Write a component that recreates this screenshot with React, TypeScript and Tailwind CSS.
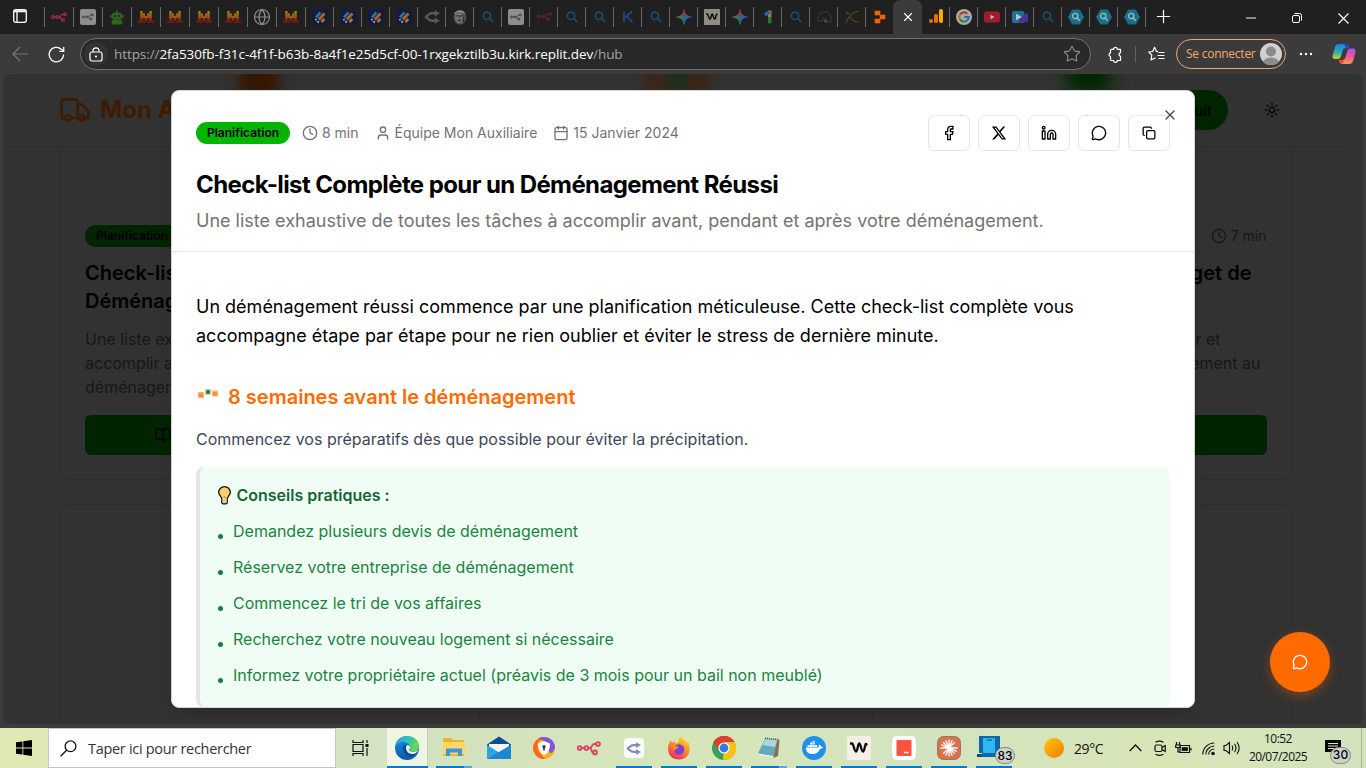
import React from "react";
import {
  Truck, Clock, User, Calendar, Facebook, Linkedin, MessageCircle, Copy, X, Sun,
  BookOpen, Globe, Star, Minus, Plus,
} from "lucide-react";
import { FaXTwitter } from "react-icons/fa6";

const SEGOE = "font-['Open_Sans','Noto_Sans',sans-serif]";

/* ---------- small drawings used in the tab strip and task bar ---------- */

function N8n({ color, size = 16 }: { color: string; size?: number }) {
  return (
    <svg width={size} height={size} viewBox="0 0 24 24" fill="none" stroke={color} strokeWidth="1.9">
      <circle cx="2.6" cy="12" r="1.9" />
      <circle cx="9.4" cy="12" r="1.9" />
      <circle cx="21" cy="8" r="1.9" />
      <circle cx="18" cy="16.4" r="1.9" />
      <path d="M4.5 12h3M11.3 12h1.4c2.6 0 1.6-4 4.4-4h2M12.7 12c2.6 0 .8 4.4 3.4 4.4" />
    </svg>
  );
}

function Mistral() {
  const rows = ["0100010", "0110110", "0111110", "0101010", "1110111"];
  const colors = ["#a5850f", "#a8700f", "#a5560f", "#92300f", "#7d1414"];
  return (
    <svg width="16" height="16" viewBox="0 0 16 16">
      {rows.map((r, y) =>
        r.split("").map((c, x) =>
          c === "1" ? <rect key={`${x}${y}`} x={x * 2.28} y={2 + y * 2.4} width="2.35" height="2.45" fill={colors[y]} /> : null
        )
      )}
    </svg>
  );
}

function Slashes() {
  return (
    <svg width="16" height="16" viewBox="0 0 16 16">
      <rect width="16" height="16" rx="1" fill="#151b40" />
      <path d="M4 8.300l4.500-5" stroke="#2478a8" strokeWidth="2.600" />
      <path d="M6.800 10.500l5.700-6" stroke="#b3621c" strokeWidth="2.800" />
      <path d="M9.500 13l2.800-3" stroke="#a87a2a" strokeWidth="2.600" />
      <path d="M3.500 10l.8 1.300M5.400 12.200l1.400 1.300" stroke="#a9a9b5" strokeWidth="1.800" />
    </svg>
  );
}

function Lens() {
  return (
    <svg width="16" height="16" viewBox="0 0 16 16" fill="none" stroke="#1c4b76" strokeWidth="1.6">
      <circle cx="7" cy="6.8" r="3.7" />
      <path d="M9.8 9.6l3.4 3.4" />
    </svg>
  );
}

function SplitArrow({ color, size = 16 }: { color: string; size?: number }) {
  return (
    <svg width={size} height={size} viewBox="0 0 16 16" fill="none" stroke={color} strokeWidth="2.4">
      <path d="M1 8C4.500 7.500 4 4.300 8 4.300h4M1 8C4.500 8.500 4 11.700 8 11.700h4" />
      <path d="M10.800 1.2l5.200 3.1-5.200 3.100zM10.800 8.600l5.200 3.100-5.200 3.100z" fill={color} stroke="none" />
    </svg>
  );
}

function Robot() {
  return (
    <svg width="16" height="16" viewBox="0 0 16 16">
      <path d="M7.3 1h1.4v3H7.3z" fill="#2f6322" />
      <rect x="3" y="3.6" width="10" height="7" rx="3" fill="#2f6322" />
      <path d="M1.2 6h1.5v3H1.2zM13.3 6h1.5v3h-1.5zM3.600 10.400h8.800c1.400 1.200 1.400 4 0 5.200H3.600c-1.400-1.200-1.400-4 0-5.200z" fill="#2f6322" />
      <circle cx="6" cy="7" r=".9" fill="#161616" />
      <circle cx="10" cy="7" r=".9" fill="#161616" />
    </svg>
  );
}

function Face() {
  return (
    <svg width="16" height="16" viewBox="0 0 16 16">
      <ellipse cx="8" cy="8.2" rx="6.3" ry="7.400" fill="#50565a" />
      <ellipse cx="7.200" cy="8.600" rx="4" ry="5.400" fill="#7c726b" />
      <path d="M2.500 5c2-3 6-4 10-1" stroke="#9a9a9a" strokeWidth="1.200" fill="none" />
      <path d="M4.200 6.800h2.600M8.400 6.800h2.600M5.800 11.300h3.400M11.500 8v5" stroke="#2b2a2a" strokeWidth="1.200" />
      <path d="M7.700 6.500v3" stroke="#4a423d" strokeWidth="1.100" />
    </svg>
  );
}

function Gemini() {
  return (
    <svg width="16" height="16" viewBox="0 0 16 16">
      <defs>
        <linearGradient id="gem" x1="0" y1="0.6" x2="1" y2="0.4">
          <stop offset="0" stopColor="#8b7d1c" />
          <stop offset="0.35" stopColor="#2f7a52" />
          <stop offset="0.6" stopColor="#2d5ca6" />
          <stop offset="1" stopColor="#3b62ab" />
        </linearGradient>
      </defs>
      <path d="M8 0.400C8.700 5 11 7.300 15.600 8 11 8.700 8.700 11 8 15.600 7.300 11 5 8.700 .4 8 5 7.300 7.300 5 8 .4z" fill="url(#gem)" stroke="url(#gem)" strokeWidth=".6" />
      <path d="M8 .4c.5 3 1.400 4.800 3 6L8 7 5 6.400C6.600 5.200 7.500 3.400 8 .4z" fill="#9a3a35" />
    </svg>
  );
}

function Wave({ size = 16, bg, rx = 1 }: { size?: number; bg: string; rx?: number }) {
  return (
    <svg width={size} height={size} viewBox="0 0 24 24">
      <rect width="24" height="24" rx={rx} fill={bg} />
      <path d="M3 7.500h2.200c1.300 0 2 8 3.800 8 1.600 0 1.800-8 3.300-8s1.900 8 3.600 8c1.400 0 1.600-4 2.400-6" stroke="#0b0b0b" strokeWidth="2.300" fill="none" />
      <circle cx="19" cy="8.300" r="1.600" fill="#0b0b0b" />
    </svg>
  );
}

function OneMark() {
  return (
    <svg width="16" height="16" viewBox="0 0 16 16" fill="none" strokeWidth="3.400">
      <path d="M9.700 1.500v7" stroke="#a58212" />
      <path d="M9.700 8.200v6.200" stroke="#277a3c" />
      <path d="M4.800 6.200L9.800 2.600" stroke="#2c5fae" />
      <path d="M9.500 1.500h1.900v3" stroke="#9b342d" strokeWidth="1" />
    </svg>
  );
}

function Hex() {
  return (
    <svg width="16" height="16" viewBox="0 0 16 16">
      <path d="M4.500 1h7L15.500 8l-4 7h-7L.5 8z" fill="#17718a" stroke="#17718a" strokeLinejoin="round" />
      <circle cx="7.200" cy="7" r="2.700" fill="none" stroke="#a7b7bc" strokeWidth="1.300" />
      <path d="M9.200 9l2.600 2.800" stroke="#a7b7bc" strokeWidth="1.500" />
    </svg>
  );
}

const Gmark = () => (
  <svg width="16" height="16" viewBox="0 0 16 16" fill="none" strokeWidth="2">
    <circle cx="8" cy="8" r="8" fill="#a9a9a9" />
    <path d="M11.300 4.700A4.700 4.700 0 0 0 4 5.600" stroke="#a8372d" />
    <path d="M4 5.500a4.700 4.700 0 0 0 0 5" stroke="#a88012" />
    <path d="M4 10.400a4.700 4.700 0 0 0 7 1.100" stroke="#2d7d41" />
    <path d="M8.200 8h4.500a4.700 4.700 0 0 1-1.700 3.600" stroke="#3566ad" />
  </svg>
);

const leftTabs: React.ReactNode[] = [
  <N8n color="#a32b4d" />,
  <div className="flex size-4 items-center justify-center rounded-[2px] bg-[#8e8e8e]"><N8n color="#3b3b48" size={12} /></div>,
  <Robot />, <Mistral />, <Mistral />, <Mistral />, <Mistral />,
  <Globe size={18} color="#8d8d8d" strokeWidth={1.6} className="shrink-0" />, <Mistral />,
];
const midTabs: React.ReactNode[] = [
  <Slashes />, <Slashes />, <Slashes />, <Slashes />,
  <SplitArrow color="#515861" />, <Face />, <Lens />,
  <div className="flex size-4 items-center justify-center rounded-[2px] bg-[#8e8e8e]"><N8n color="#3b3b48" size={12} /></div>,
  <N8n color="#692136" size={15} />, <Lens />, <Lens />,
  <svg width="16" height="16" viewBox="0 0 16 16" fill="none" stroke="#25478b" strokeWidth="1.700"><path d="M4 2.500v11M12 2.500L5 8.500M7 7l5.500 6.500" /></svg>,
  <Lens />, <Gemini />, <Wave bg="#918c85" />, <Gemini />, <OneMark />, <Lens />,
  <svg width="16" height="16" viewBox="0 0 16 16" fill="none" stroke="#323232" strokeWidth="1.300"><path d="M2 12V8l3-4.500 6-.5 4 4.500V13h-4M2 12h5V8M9 9l2 4" /><circle cx="9.500" cy="12" r=".8" stroke="#58531c" /></svg>,
  <svg width="16" height="16" viewBox="0 0 16 16" fill="none" stroke="#5d421c" strokeWidth="1.200"><path d="M2 2l2 3.500M15 2C8 3 4 8 2 14M6 8c2 4 5 5 9 5M3 4l3 1" /></svg>,
  <svg width="16" height="16" viewBox="0 0 16 16" fill="#f26207"><path d="M3 2h5v4H3zM8 6h5v4H8zM3 10h5v4H3z" stroke="#f26207" strokeWidth=".6" /></svg>,
];
const rightTabs: React.ReactNode[] = [
  <Gmark />,
  <svg width="16" height="16" viewBox="0 0 16 16"><rect y="2.500" width="16" height="11" rx="2.500" fill="#a31a33" /><path d="M6.500 5.700l4 2.300-4 2.300z" fill="#b9b9b9" /></svg>,
  <svg width="16" height="16" viewBox="0 0 16 16"><rect y="2" width="12.500" height="12" rx="2" fill="#1f7199" /><path d="M7 14V9l9-5v9z" fill="#43369a" /><path d="M4 4.800L10 8l-6 3.200z" fill="#c2c2c2" /></svg>,
  <Lens />, <Hex />, <Hex />, <Hex />,
];

function Tab({ children, wide }: { children: React.ReactNode; wide?: boolean }) {
  return (
    <div className={wide ? "flex w-[29px] shrink-0 items-center" : "flex w-[28px] shrink-0 items-center"}>
      <span className="h-5 w-px shrink-0 bg-[#696969]" />
      <span className="ml-[6px] flex size-4 shrink-0 items-center justify-center">{children}</span>
    </div>
  );
}

function TabStrip() {
  return (
    <div className="flex h-[34px] shrink-0 bg-[#202020]">
      <div className="flex w-[44px] shrink-0 items-center pl-[13px] pb-[2px]">
        <svg width="14" height="14" viewBox="0 0 14 14" fill="none" stroke="#fff" strokeWidth="1.300">
          <rect x=".7" y=".7" width="12.600" height="12.600" rx="2" />
          <path d="M1 2.700h12M1 1.800h12M4 3v10" />
        </svg>
      </div>
      <div className="flex h-[33px]">
        {leftTabs.map((t, i) => <Tab key={i} wide>{t}</Tab>)}
        {midTabs.map((t, i) => <Tab key={i}>{t}</Tab>)}
      </div>
      <div className="flex w-[29px] shrink-0 items-center justify-center rounded-t-[7px] bg-[#3b3b3b]">
        <X size={14} color="#fff" strokeWidth={2} />
      </div>
      <div className="flex w-[27px] shrink-0 items-center pl-[6px] pb-[2px]">
        <svg width="16" height="16" viewBox="0 0 16 16">
          <circle cx="3" cy="13" r="2" fill="#e8710a" />
          <rect x="6" y="6" width="4" height="9" rx="1.800" fill="#e8710a" />
          <rect x="11" y="1" width="4" height="14" rx="1.800" fill="#f9ab00" />
        </svg>
      </div>
      <div className="flex h-[33px]">
        {rightTabs.map((t, i) => <Tab key={i}>{t}</Tab>)}
        <span className="mt-[7px] h-5 w-px bg-[#696969]" />
      </div>
      <div className="flex flex-1 items-center pb-[2px] text-white">
        <Plus size={21} strokeWidth={1.4} className="ml-[7px]" />
        <Minus size={16} strokeWidth={1.4} className="ml-[69px] mt-1" />
        <svg className="ml-[32px] mt-1" width="12" height="12" viewBox="0 0 12 12" fill="none" stroke="#fff">
          <rect x="1.500" y="3.500" width="7" height="7" rx="1.500" />
          <path d="M3.500 1.500h5a2 2 0 0 1 2 2v5" />
        </svg>
        <svg className="ml-[35px] mt-1" width="11" height="11" viewBox="0 0 11 11" stroke="#fff" strokeWidth="1.200"><path d="M.5.500l10 10M10.500.500l-10 10" /></svg>
      </div>
    </div>
  );
}

function Toolbar() {
  return (
    <div className="flex h-[40px] shrink-0 items-center bg-[#3b3b3b]">
      <svg className="ml-[12px]" width="17" height="16" viewBox="0 0 17 16" fill="none" stroke="#777" strokeWidth="1.200"><path d="M16 8H1M8 1L1 8l7 7" /></svg>
      <svg className="ml-[19px]" width="17" height="17" viewBox="0 0 17 17" fill="none" stroke="#fff" strokeWidth="1.300"><path d="M15.600 8.500a7.200 7.200 0 1 1-2.300-5.200L15.500 5M15.700 1v4.300h-4.400" /></svg>
      <div className="ml-[15px] flex h-8 w-[1011px] items-center rounded-full border border-[#707070] bg-[#292929]">
        <span className="ml-[3px] flex size-6 items-center justify-center rounded-full bg-[#333]">
          <svg width="14" height="15" viewBox="0 0 14 15" fill="none" stroke="#fff" strokeWidth="1.200"><rect x="1" y="5" width="12" height="9" rx="2" /><path d="M4 5V3.800a3 3 0 0 1 6 0V5" /><circle cx="7" cy="9.500" r=".5" fill="#fff" /></svg>
        </span>
        <span className={`ml-[6px] w-[530px] whitespace-nowrap text-[13.5px] leading-5 tracking-[-0.08px] text-[#a4a4a4] ${SEGOE}`}>
          https://<span className="text-white">2fa530fb-f31c-4f1f-b63b-8a4f1e25d5cf-00-1rxgekztilb3u.kirk.replit.dev</span>/hub
        </span>
        <Star size={18} strokeWidth={1.5} color="#8f8f8f" className="ml-auto mr-[9px]" />
      </div>
      <svg className="ml-[16px]" width="16" height="17" viewBox="0 0 16 17" fill="none" stroke="#fff" strokeWidth="1.200"><path d="M4.500 3.300h2a1.900 1.900 0 0 1 3.800 0h3.200v3.400a1.900 1.900 0 0 0 0 3.700v4.100h-3.200a1.900 1.900 0 0 1-3.800 0h-2a1 1 0 0 1-1-1v-3a1.900 1.900 0 0 1 0-3.700V4.300a1 1 0 0 1 1-1z" strokeLinejoin="round" /></svg>
      <span className="ml-[12px] h-4 w-px bg-[#606060]" />
      <svg className="ml-[12px]" width="17" height="16" viewBox="0 0 17 16" fill="none" stroke="#fff" strokeWidth="1.200"><path d="M10 5.700L8.500 5.500 6.600 1.300 4.700 5.500 .8 6l3 3-.8 5L7.500 11.800M10.500 6.500h6M9.500 9.500h7M10.500 12.500h6" strokeLinejoin="round" /></svg>
      <div className="ml-[11px] flex h-[30px] w-[110px] items-center justify-between rounded-full border border-[#f0a56a] pl-[9px] pr-[3px]">
        <span className={`whitespace-nowrap text-[12px] tracking-[-0.25px] text-[#f5a76c] ${SEGOE}`}>Se connecter</span>
        <svg width="22" height="22" viewBox="0 0 22 22"><clipPath id="av"><circle cx="11" cy="11" r="11" /></clipPath><g clipPath="url(#av)"><rect width="22" height="22" fill="#d2d0ce" /><circle cx="11" cy="8.500" r="5" fill="#8d8b89" /><ellipse cx="11" cy="20" rx="8" ry="5.500" fill="#8d8b89" /></g></svg>
      </div>
      <svg className="ml-[13px]" width="14" height="4" viewBox="0 0 14 4" fill="#fff"><circle cx="2" cy="2" r="1.200" /><circle cx="7" cy="2" r="1.200" /><circle cx="12" cy="2" r="1.200" /></svg>
      <svg className="ml-[19px]" width="24" height="22" viewBox="0 0 24 22">
        <defs>
          <linearGradient id="cp1" x1="0" y1="0" x2="0" y2="1"><stop offset="0" stopColor="#1f7be8" /><stop offset=".6" stopColor="#2bb7a5" /><stop offset="1" stopColor="#e8c92c" /></linearGradient>
          <linearGradient id="cp2" x1="0" y1="0" x2="0" y2="1"><stop offset="0" stopColor="#a156e8" /><stop offset=".5" stopColor="#ee5596" /><stop offset="1" stopColor="#fb9b45" /></linearGradient>
        </defs>
        <path d="M7 1h7c2 0 2 2 3 4h-3c-2 0-3 1-3.500 3L9 13c-.6 2-1.500 3-3.500 3H3c-2 0-3-1.500-2.300-4L3 4c.6-2 2-3 4-3z" fill="url(#cp1)" />
        <path d="M17 21h-7c-2 0-2-2-3-4h3c2 0 3-1 3.500-3L15 9c.6-2 1.500-3.500 3.500-3.500H21c2 0 3 2 2.300 4.500L21 18c-.6 2-2 3-4 3z" fill="url(#cp2)" />
        <path d="M12 1h2c2 0 2 2 3 4.500h-3z" fill="#1850cf" />
        <path d="M7 17l3 0c1 0 2-.5 2.500-1.300L10.500 21C8 21 8 19 7 17z" fill="#ef4b2f" />
      </svg>
    </div>
  );
}

/* ---------- web page behind the dialog (shown through the dark overlay) ---------- */

const dimCard = "w-[394.5px] shrink-0 border-[#2d2d2d] border";

function Page() {
  return (
    <div className="relative mx-[3px] mb-[4px] h-[650px] overflow-hidden rounded-[8px] bg-[#323232] font-['Inter',sans-serif] text-black">
      <div className="absolute left-[236px] top-[-12px] h-[34px] w-[40px] rounded-md bg-[#351600] blur-[7px]" />
      <div className="absolute left-[640px] top-[-14px] flex h-[32px] w-[68px] blur-[5px]">
        <span className="flex-1 bg-[#3b2618]" /><span className="flex-1 bg-[#202e1c]" /><span className="flex-1 bg-[#3b2618]" />
      </div>
      <div className="absolute left-[1064px] top-[-14px] h-[32px] w-[44px] rounded-md bg-[#002600] blur-[8px]" />
      <header className="relative flex h-[73px] w-[1344px] items-center border-b border-[#2c2c2c] pl-[56px] pr-[56px]">
        <Truck size={32} color="#3f1b02" strokeWidth={2} />
        <span className="ml-[9px] text-[24px] font-bold leading-8 text-[#3f1b02]">Mon Auxiliaire</span>
        <div className="ml-auto flex h-10 w-[150px] items-center justify-end rounded-full bg-[#002400] pr-4 text-[14px] font-semibold">Devis gratuit</div>
        <Sun size={16} className="ml-[36px] mr-[11px]" />
      </header>
      <main className="flex w-[1231px] flex-col gap-6 pl-[57px]">
        <div className="flex h-[333px] gap-6">
          <article className={`${dimCard} flex flex-col rounded-b-lg border-t-0 px-6 pt-[78px]`}>
            <span className="h-[22px] w-[94px] rounded-full bg-[#002400] text-center text-[12px] font-semibold leading-[22px]">Planification</span>
            <h3 className="mt-3 w-[100px] overflow-hidden whitespace-nowrap text-[20px] font-semibold leading-7">Check-list<br />Déménagement</h3>
            <p className="mt-3 w-[100px] overflow-hidden whitespace-nowrap text-[16px] leading-6 text-[#171717]">Une liste exhaustive<br />accomplir avant<br />déménagement.</p>
            <div className="mt-4 flex h-10 shrink-0 items-center rounded-md bg-[#002400] pl-[70px]"><BookOpen size={16} /></div>
          </article>
          <article className={`${dimCard} rounded-b-lg border-t-0`} />
          <article className={`${dimCard} flex flex-col rounded-b-lg border-t-0 px-6 pt-[78px] text-right`}>
            <span className="flex h-[22px] items-center justify-end gap-1 text-[14px] text-[#171717]"><Clock size={16} /><span className="pb-[2px]">7 min</span></span>
            <h3 className="mt-3 h-14 pr-[15px] text-[20px] font-semibold leading-7">Budget de</h3>
            <p className="mt-3 h-[72px] text-[16px] leading-6 text-[#171717]">
              <span className="block pr-[46px]">calculer et</span>
              <span className="block pr-[6px]">déménagement au</span>
            </p>
            <div className="mt-4 h-10 rounded-md bg-[#002400]" />
          </article>
        </div>
        <div className="flex h-[260px] gap-6">
          <article className={`${dimCard} rounded-lg`} />
          <article className={`${dimCard} rounded-lg`} />
          <article className={`${dimCard} rounded-lg`} />
        </div>
      </main>
    </div>
  );
}

const tips = [
  "Demandez plusieurs devis de déménagement",
  "Réservez votre entreprise de déménagement",
  "Commencez le tri de vos affaires",
  "Recherchez votre nouveau logement si nécessaire",
  "Informez votre propriétaire actuel (préavis de 3 mois pour un bail non meublé)",
];

function Dialog() {
  const share = [<Facebook size={16} />, <FaXTwitter size={16} />, <Linkedin size={16} />, <MessageCircle size={16} />, <Copy size={14} strokeWidth={2.2} />];
  return (
    <section className="absolute left-[171px] top-[90px] flex h-[618px] w-[1024px] flex-col overflow-hidden rounded-lg border border-[#d4d4d4] bg-white font-['Inter',sans-serif] text-black shadow-lg">
      <header className="h-[161px] shrink-0 border-b border-[#e5e5e5] px-6 pt-6">
        <div className="flex h-9 items-center text-[14px] text-[#737373]">
          <span className="h-[22px] w-[94px] rounded-full bg-[#00b400] text-center text-[12px] font-semibold leading-[22px] text-black">Planification</span>
          <span className="ml-3 flex items-center gap-1"><Clock size={16} /><span className="pb-[2px]">8 min</span></span>
          <span className="ml-4 flex items-center gap-1"><User size={16} /><span className="pb-[2px]">Équipe Mon Auxiliaire</span></span>
          <span className="ml-4 flex items-center gap-1"><Calendar size={16} /><span className="pb-[2px]">15 Janvier 2024</span></span>
          <div className="ml-auto flex gap-2 text-black">
            {share.map((s, i) => <span key={i} className="flex h-9 w-[42px] items-center justify-center rounded-md border border-[#e5e5e5]">{s}</span>)}
          </div>
        </div>
        <h1 className="mt-[18px] text-[24px] font-bold leading-8 tracking-[-0.6px]">Check-list Complète pour un Déménagement Réussi</h1>
        <p className="mt-[6px] text-[18px] leading-7 text-[#737373]">Une liste exhaustive de toutes les tâches à accomplir avant, pendant et après votre déménagement.</p>
      </header>
      <X size={16} className="absolute right-4 top-4 text-[#4d4d4d]" />
      <div className="px-6 pt-10">
        <p className="text-[18px] leading-[29.25px]">Un déménagement réussi commence par une planification méticuleuse. Cette check-list complète vous accompagne étape par étape pour ne rien oublier et éviter le stress de dernière minute.</p>
        <h2 className="mt-8 flex h-7 items-center text-[20px] font-semibold leading-7 text-[#ff6b00]">
          <svg className="mb-[6px] mr-2" width="24" height="12" viewBox="0 0 24 12">
            <rect x="2" y="4" width="6" height="6" fill="#ffb27a" /><rect x="3" y="5.500" width="4" height="3.500" fill="#ff8433" />
            <rect x="9.500" y="1.500" width="5" height="5" fill="#56a65b" /><rect x="11" y="3" width="2" height="2" fill="#5b3a36" />
            <rect x="16" y="2.500" width="6" height="6" fill="#ffb27a" /><rect x="17" y="4" width="4" height="3.500" fill="#ff8a40" />
          </svg>
          8 semaines avant le déménagement
        </h2>
        <p className="mt-[15px] text-[16px] leading-[26px] text-[#3d4759]">Commencez vos préparatifs dès que possible pour éviter la précipitation.</p>
        <div className="mt-[15px] h-[240px] rounded-lg border-l-4 border-[#e5e5e5] bg-[#f0fdf4] pl-4 pt-4">
          <h4 className="flex h-6 items-center text-[16px] font-semibold text-[#166534]">
            <svg className="ml-[0.5px] mr-[5px]" width="15" height="20" viewBox="0 0 15 20">
              <path d="M7.500 1.600a5.800 5.800 0 0 0-5.800 5.800c0 2.600 2.900 4.100 3.100 6.600v3.600c0 .8.600 1.300 1.300 1.300h2.800c.7 0 1.300-.5 1.300-1.300V14c.2-2.500 3.100-4 3.100-6.600a5.800 5.800 0 0 0-5.800-5.800z" fill="#ffd067" stroke="#111" strokeWidth="1.300" />
              <path d="M5.500 14h4v4h-4z" fill="#ccc" />
              <path d="M6.600 12h1.800" stroke="#e59c26" strokeWidth="2" />
            </svg>
            Conseils pratiques :
          </h4>
          <ul className="mt-3 flex flex-col gap-3 text-[16px] leading-6 text-[#1a8442]">
            {tips.map((t) => (
              <li key={t} className="flex items-center">
                <span className="ml-[2px] mr-[10px] mt-[11px] size-[5px] rounded-full bg-[#15803d]" />{t}
              </li>
            ))}
          </ul>
        </div>
      </div>
    </section>
  );
}

/* ---------- Windows task bar ---------- */

function App24({ children, line = true }: { children: React.ReactNode; line?: boolean }) {
  return (
    <div className="flex w-[45px] shrink-0 flex-col items-center">
      <span className="flex h-[38px] items-center pt-[2px]">{children}</span>
      <span className={line ? "h-[2px] w-9 bg-[#0078d7]" : "h-[2px] w-9"} />
    </div>
  );
}

function Taskbar() {
  return (
    <div className={`flex h-10 shrink-0 bg-[linear-gradient(90deg,#dfe9b2_0%,#d3e3c4_28%,#d3e2bd_33%,#d7e6b9_50%,#d2e3bf_68%,#d8e6b6_85%,#d3e2bd_100%)] text-[#111] ${SEGOE}`}>
      <div className="flex w-12 shrink-0 items-center justify-center">
        <svg width="16" height="16" viewBox="0 0 16 16"><path d="M0 2.300L6.500 1.400v6.200H0zM7.300 1.300L16 0v7.600H7.300zM0 8.400h6.500v6.200L0 13.700zM7.300 8.400H16V16l-8.700-1.200z" /></svg>
      </div>
      <div className="flex w-[288px] shrink-0 items-center border border-[#c6c6c6] bg-white pl-[11px]">
        <svg width="17" height="17" viewBox="0 0 17 17" fill="none" stroke="#111" strokeWidth="1.300"><circle cx="10.500" cy="6.300" r="5.400" /><path d="M6.600 10.200L.6 16.200" /></svg>
        <span className="ml-[11px] mt-[2px] whitespace-nowrap text-[14.500px] tracking-[-0.3px] text-[#333]">Taper ici pour rechercher</span>
      </div>
      <div className="flex w-[51px] shrink-0 items-center justify-center pr-[2px]">
        <svg width="17" height="16" viewBox="0 0 17 16" fill="none" stroke="#111" strokeWidth="1.200"><path d="M1 0v2.500h10V0M1 16v-2.500h10V16M1 4.500h10v7H1zM15 0v3M15 8v8" /><path d="M13.500 4h3v3h-3z" fill="#111" stroke="none" /></svg>
      </div>
      <div className="flex w-[41px] shrink-0 flex-col items-center border-r border-[#c9d2ba] bg-[#eff5e2]">
        <span className="flex h-[38px] items-center pt-[2px]">
          <svg width="24" height="24" viewBox="0 0 24 24">
            <defs>
              <linearGradient id="ed1" x1="0" y1="0" x2="1" y2=".3"><stop offset="0" stopColor="#2398d8" /><stop offset=".5" stopColor="#2bbfc9" /><stop offset="1" stopColor="#66d84c" /></linearGradient>
              <linearGradient id="ed2" x1="0" y1="0" x2="0" y2="1"><stop offset="0" stopColor="#1c8ee0" /><stop offset="1" stopColor="#0e5aa8" /></linearGradient>
            </defs>
            <circle cx="12" cy="12" r="12" fill="url(#ed2)" />
            <path d="M0 11.500C.6 5 5.500 0 12 0s12 4.600 12 10.300c0 3.200-2.600 5.400-5.600 5.400-2.400 0-4.300-.7-4.300-1.800 0-.6 1-.9 1-2.700C15.100 8.500 12.500 6 8.500 6 4 6 1 8.500 0 11.500z" fill="url(#ed1)" />
            <path d="M8 12c0-2 1.500-3.500 4-3.500 2 0 3.100 1.200 3.100 2.700 0 1.800-1 2.100-1 2.700 0 1.100 1.900 1.800 4.300 1.800 2 0 3.600-.7 4.600-2-.6 2.500-2.500 5.300-5.500 6.500C12 21.500 8 16.500 8 12z" fill="#0c4a94" />
            <path d="M12.300 9c2 0 2.800 1.200 2.800 2.200 0 1.800-1 2.100-1 2.700 0 1.100 1.900 1.800 4.300 1.800 2 0 3.600-.7 4.600-2-1 3.400-3.400 4.300-5.500 4.300-4 0-6.500-3-6.500-6 0-1.400.4-2.500 1.300-3z" fill="#eff5e2" />
          </svg>
        </span>
        <span className="h-[2px] w-[41px] bg-[#0078d7]" />
      </div>
      <div className="flex w-[48px] shrink-0 flex-col items-center pl-[3px]">
        <span className="flex h-[38px] items-center">
          <svg width="22" height="20" viewBox="0 0 22 20"><path d="M0 1h8l2 2h11v16H0z" fill="#f0b429" /><path d="M0 5h22v12H0z" fill="#ffd767" /><path d="M3 19v-7.500h16V19h-4v-3.500H7V19z" fill="#3c96dc" /></svg>
        </span>
        <span className="flex h-[2px] w-9 bg-[#0078d7]"><span className="ml-auto w-2 bg-[#5ba7e6]" /></span>
      </div>
      <App24 line={false}><svg width="24" height="24" viewBox="0 0 24 24"><path d="M0 8.500L12 .5l12 8V23H0z" fill="#0c4e93" /><path d="M2 8h20v8H2z" fill="#f3f7fb" /><path d="M0 9l12 7.500L24 9v14H0z" fill="#2ba3e4" /><path d="M0 23l24-14v14z" fill="#1c87d3" /></svg></App24>
      <App24 line={false}><svg width="22" height="22" viewBox="0 0 22 22"><circle cx="11" cy="11" r="11" fill="#f9b21f" /><path d="M5 1.800A11 11 0 0 1 22 11c-1 3-3 5-5 5L11 4z" fill="#7955e2" /><path d="M11 2.500C8 2 5 4 4.500 8c0 6 4 10 8 13.900A11 11 0 0 1 5 1.800 11 11 0 0 1 11 2.500z" fill="#fb6b18" /><path d="M11 4l6 2.400c0 5-1.500 9.600-6 11.600-4.500-2-6-6.600-6-11.600z" fill="#fff" /><circle cx="11" cy="9.700" r="1.600" fill="#2d3155" /><path d="M10.200 10h1.600v3.600h-1.600z" fill="#2d3155" /></svg></App24>
      <App24 line={false}><N8n color="#df4267" size={24} /></App24>
      <App24><span className="flex size-[20px] items-center justify-center rounded-[4px] bg-[#fbfbfd]"><SplitArrow color="#8190a8" size={15} /></span></App24>
      <App24><svg width="24" height="24" viewBox="0 0 24 24"><defs><linearGradient id="ff" x1=".8" y1="0" x2=".3" y2="1"><stop offset="0" stopColor="#ffe23c" /><stop offset=".45" stopColor="#ff9326" /><stop offset="1" stopColor="#f22a5f" /></linearGradient></defs><path d="M14.500 0c1 3 4 4 5.500 6.500l.8-1.500c3.500 6 3 18-8.800 18.500C4 23.500 1 18 1 12.500c0-4 1.800-7 3-8.500l1 3 2.500-2 1 2.500 3-1C11 4 12.500 1.500 14.500 0z" fill="url(#ff)" /><circle cx="12" cy="13.500" r="5.200" fill="#7a3fd6" /><path d="M6 10c2-1 4 .500 6 1-1 2-4 1.500-4 4-2-1-2.500-3-2-5z" fill="#ff8b24" /></svg></App24>
      <App24><svg width="24" height="24" viewBox="0 0 24 24"><circle cx="12" cy="12" r="12" fill="#34a353" /><path d="M12 12L1.600 6A12 12 0 0 1 22.400 6z" fill="#e33b2e" /><path d="M12 12l10.400-6A12 12 0 0 1 12 24l-1-1z" fill="#fbc116" /><path d="M12 6h10.400A12 12 0 0 1 12 24l5.200-9z" fill="#fbc116" /><path d="M1.600 6A12 12 0 0 1 22.400 6H12L7 15z" fill="#e33b2e" /><circle cx="12" cy="12" r="5.600" fill="#fff" /><circle cx="12" cy="12" r="4.400" fill="#3478e6" /></svg></App24>
      <div className="flex w-[45px] shrink-0 flex-col items-center">
        <span className="flex h-[38px] items-center pt-[2px]"><svg width="24" height="24" viewBox="0 0 24 24"><path d="M20 3l2.500 1-1.500 16-5 2z" fill="#8b6e4d" /><path d="M8 2.500l12.500 1L16.500 21 1 17.500z" fill="#67a9b8" /><path d="M8 3l12 1-2 7L5.500 9z" fill="#a5d8dd" /><path d="M8 2.300l12.500 1.200" stroke="#4c5357" strokeWidth="1.500" strokeDasharray="1 1" /><path d="M1 17.500l15.500 2.500-.3 1.500L1 19z" fill="#e8f1f1" /></svg></span>
        <span className="flex h-[2px] w-9 bg-[#0078d7]"><span className="ml-auto w-2 bg-[#5ba7e6]" /></span>
      </div>
      <App24><svg width="24" height="24" viewBox="0 0 24 24"><circle cx="12" cy="12" r="12" fill="#1d91ec" /><path d="M4 11.500h13c-.5-1.200-.3-2.200.3-3 1.100.6 1.500 1.300 1.600 2.200.8-.1 1.400 0 2.100.3-.4 1.300-1.500 1.800-3 1.800C16.600 16.500 14 18 10.500 18 6 18 4 15.800 4 11.500zM5.500 9h2.200v2H5.500zM8 9h2.200v2H8zM10.500 9h2.200v2h-2.200zM13 9h2.200v2H13zM8 6.600h2.200v2H8zM10.500 6.600h2.200v2h-2.200zM10.500 5h2.200v1h-2.200z" fill="#fff" /></svg></App24>
      <App24><Wave size={24} bg="#f7efe6" rx={2} /></App24>
      <App24><svg width="24" height="24" viewBox="0 0 24 24"><rect width="24" height="24" rx="5" fill="#fff" /><rect x="4.500" y="4" width="15" height="16" rx="1" fill="#ff5340" /><path d="M12 16.500h4.500" stroke="#fff" strokeWidth="1.500" /></svg></App24>
      <App24><svg width="24" height="24" viewBox="0 0 24 24"><rect x=".5" y=".5" width="23" height="23" rx="6" fill="#d9714d" stroke="#9a7564" /><path d="M12 3.500v17M3.500 12h17M6.200 6.200l11.600 11.600M17.800 6.200L6.200 17.800M8.700 4.300l6.600 15.400M15.300 4.300L8.700 19.700M4.300 8.700l15.400 6.600" stroke="#fff" strokeWidth="1.300" /></svg></App24>
      <div className="relative flex w-[45px] shrink-0 flex-col items-center">
        <span className="flex h-[38px] items-center pr-[10px]"><svg width="24" height="22" viewBox="0 0 24 22"><path d="M2 0h21v21H5v-4H2z" fill="#0b68ad" /><path d="M6 2h12v15H6z" fill="#2eb7f2" /><path d="M10 4h5" stroke="#0b4d83" /><path d="M0 18h5v3H0z" fill="#0b4d83" /></svg></span>
        <span className="h-[2px] w-9 bg-[#0078d7]" />
        <span className="absolute left-[24px] top-[19px] flex h-[17px] w-5 items-center justify-center rounded-full border border-[#858585] bg-[#ced2c9] font-['Inter',sans-serif] text-[12px] font-medium text-black">83</span>
      </div>
      <div className="ml-[28px] flex shrink-0 items-center">
        <span className="size-5 rounded-full bg-[linear-gradient(135deg,#ffc60b,#ee7d00)]" />
        <span className="ml-[10px] text-[14px] tracking-[-0.4px]">29°C</span>
      </div>
      <div className="ml-auto flex shrink-0 items-center">
        <svg width="13" height="8" viewBox="0 0 13 8" fill="none" stroke="#111" strokeWidth="1.300"><path d="M.7 7l5.800-6 5.800 6" /></svg>
        <svg className="ml-[12px]" width="12" height="16" viewBox="0 0 12 16" fill="none" stroke="#111" strokeWidth="1.200"><rect x="1" y="5" width="7" height="6.500" rx="1.500" /><path d="M8 7.500L11.200 5.500v6L8 9.500M1.500 2.200q4-2.200 8 0M1.500 14.300q4 2.200 8 0" /></svg>
        <svg className="ml-[9px]" width="17" height="14" viewBox="0 0 17 14" fill="none" stroke="#111" strokeWidth="1.200"><path d="M5 4.500h9.500v7H5zM16 7v2.500M1.500 1v3M4.500 1v3M.7 4h4.600v2.500H.7zM3 7v4h2" /><path d="M7 6.600h5.500v3H7z" fill="#111" strokeWidth=".8" /></svg>
        <svg className="ml-[10px]" width="13" height="13" viewBox="0 0 13 13" fill="none" stroke="#111" strokeWidth="1.100"><path d="M.8 12.500A11.500 11.500 0 0 1 12.300 1M3.800 12.500A8.500 8.500 0 0 1 12.300 4M6.600 12.500A5.700 5.700 0 0 1 12.300 7" /><circle cx="11" cy="11.500" r="1.200" fill="#111" /></svg>
        <svg className="ml-[8px]" width="17" height="14" viewBox="0 0 17 14" fill="none" stroke="#111" strokeWidth="1.100"><path d="M1 4.500h2L6.500 1.500v11L3 9.500H1zM9 4.500q1.500 2.500 0 5M11.500 2.800q3 4.200 0 8.400M14 1q4.300 6 0 12" /></svg>
        <span className="ml-[5px] flex w-[66px] flex-col items-center text-[12px] leading-[18px] tracking-[-0.55px]"><span>10:52</span><span className="whitespace-nowrap">20/07/2025</span></span>
        <span className="relative ml-[14px] h-10 w-[37px]">
          <svg className="mt-[12px]" width="17" height="16" viewBox="0 0 17 16"><path d="M0 0h16v12h-3v3.500L9.500 12H0z" fill="#050505" /><path d="M3 3.500h10M3 6h10M3 8.500h6" stroke="#d7e5b8" strokeWidth="1.100" /></svg>
          <span className="absolute left-[5px] top-[18.500px] flex h-[17px] w-[21px] items-center justify-center rounded-full border border-[#858585] bg-[#ced2c9] font-['Inter',sans-serif] text-[12px] font-medium text-black">30</span>
        </span>
        <span className="ml-[-1px] mr-[4px] h-10 w-px bg-[#a9b396]" />
      </div>
    </div>
  );
}

export default function App() {
  return (
    <div className="relative flex h-[768px] w-[1366px] flex-col overflow-hidden bg-[#3b3b3b]">
      <TabStrip />
      <Toolbar />
      <Page />
      <Taskbar />
      <Dialog />
      <button className="absolute left-[1270px] top-[632px] flex size-[60px] items-center justify-center rounded-full bg-[#ff6b00] text-white shadow-[0_4px_12px_rgba(255,107,0,0.35)]">
        <MessageCircle size={16} />
      </button>
    </div>
  );
}
